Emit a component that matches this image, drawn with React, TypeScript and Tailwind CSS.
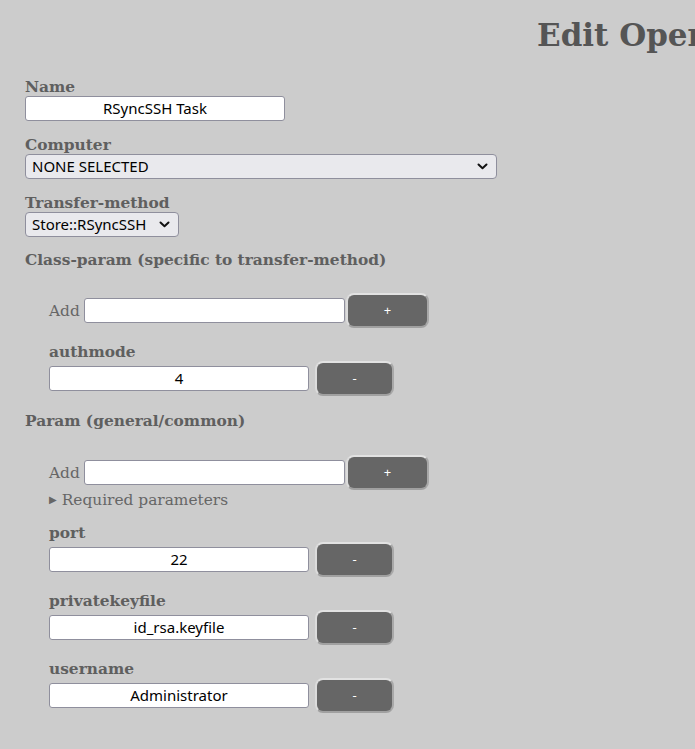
import React from "react";

const serif = { fontFamily: '"DejaVu Serif", serif' };

function Chevron() {
  return (
    <svg width="11" height="7" viewBox="0 0 11 7" className="shrink-0">
      <path d="M1.5 1.5 L5.5 5.2 L9.5 1.5" fill="none" stroke="#111" strokeWidth="2" strokeLinecap="round" strokeLinejoin="round" />
    </svg>
  );
}

function TextBox({ value, className = "" }: { value: string; className?: string }) {
  return (
    <div
      className={
        "h-[25px] w-[260px] shrink-0 bg-white border border-[#8f8f9d] rounded-[3px] flex items-center justify-center text-[15px] text-black leading-none " +
        className
      }
      style={{ fontFamily: '"Noto Sans", sans-serif' }}
    >
      {value}
    </div>
  );
}

function Btn({ label, className = "" }: { label: string; className?: string }) {
  return (
    <div
      className={
        "h-[35px] shrink-0 bg-[#666666] rounded-[8px] border-2 border-t-[#e2e2e2] border-l-[#dcdcdc] border-r-[#a8a8a8] border-b-[#a0a0a0] flex items-center justify-center text-white text-[13px] " +
        className
      }
      style={{ fontFamily: '"Noto Sans", sans-serif' }}
    >
      {label}
    </div>
  );
}

function Label({ children, className = "" }: { children: React.ReactNode; className?: string }) {
  return (
    <div className={"text-[15.4px] font-bold leading-[18px] text-[#5f5f5f] whitespace-nowrap " + className}>{children}</div>
  );
}

function AddRow() {
  return (
    <div className="flex items-center pl-[24px]">
      <span className="text-[15.4px] text-[#666] leading-[18px] w-[35px]">Add</span>
      <TextBox value="" className="w-[261px]" />
      <Btn label="+" className="ml-[1px] w-[83px]" />
    </div>
  );
}

function ParamItem({ name, value, last }: { name: string; value: string; last?: boolean }) {
  return (
    <div className={"pl-[24px] " + (last ? "" : "mb-[15px]")}>
      <Label>{name}</Label>
      <div className="flex items-center">
        <TextBox value={value} />
        <Btn label="-" className="ml-[6px] w-[79px]" />
      </div>
    </div>
  );
}

function Select({ value, width }: { value: string; width: string }) {
  return (
    <div
      className={
        "h-[25px] bg-[#e9e9ed] border border-[#8f8f9d] rounded-[4px] flex items-center justify-between pl-[6px] pr-[8px] text-[15px] text-black " +
        width
      }
      style={{ fontFamily: '"Noto Sans", sans-serif' }}
    >
      <span>{value}</span>
      <Chevron />
    </div>
  );
}

export default function App() {
  return (
    <div className="w-[695px] h-[749px] overflow-hidden bg-[#cccccc]" style={serif}>
      <h1 className="pt-[17px] pl-[537px] whitespace-nowrap text-[31px] leading-[36px] font-bold text-[#555555]">
        Edit Operation
      </h1>
      <div className="pl-[25px] pt-[25px]">
        <Label>Name</Label>
        <TextBox value="RSyncSSH Task" />
        <Label className="mt-[15px]">Computer</Label>
        <Select value="NONE SELECTED" width="w-[472px]" />
        <Label className="mt-[15px]">Transfer-method</Label>
        <Select value="Store::RSyncSSH" width="w-[154px]" />
        <Label className="mt-[14px]">Class-param (specific to transfer-method)</Label>
        <div className="mt-[24px]">
          <AddRow />
        </div>
        <div className="mt-[15px]">
          <ParamItem name="authmode" value="4" last />
        </div>
        <Label className="mt-[16px]">Param (general/common)</Label>
        <div className="mt-[25px]">
          <AddRow />
        </div>
        <div className="mt-[1px] pl-[24px] text-[15.4px] leading-[18px] text-[#666] flex items-center">
          <span className="text-[10px] mr-[5px]">▶</span>
          <span>Required parameters</span>
        </div>
        <div className="mt-[15px]">
          <ParamItem name="port" value="22" />
          <ParamItem name="privatekeyfile" value="id_rsa.keyfile" />
          <ParamItem name="username" value="Administrator" last />
        </div>
      </div>
    </div>
  );
}
